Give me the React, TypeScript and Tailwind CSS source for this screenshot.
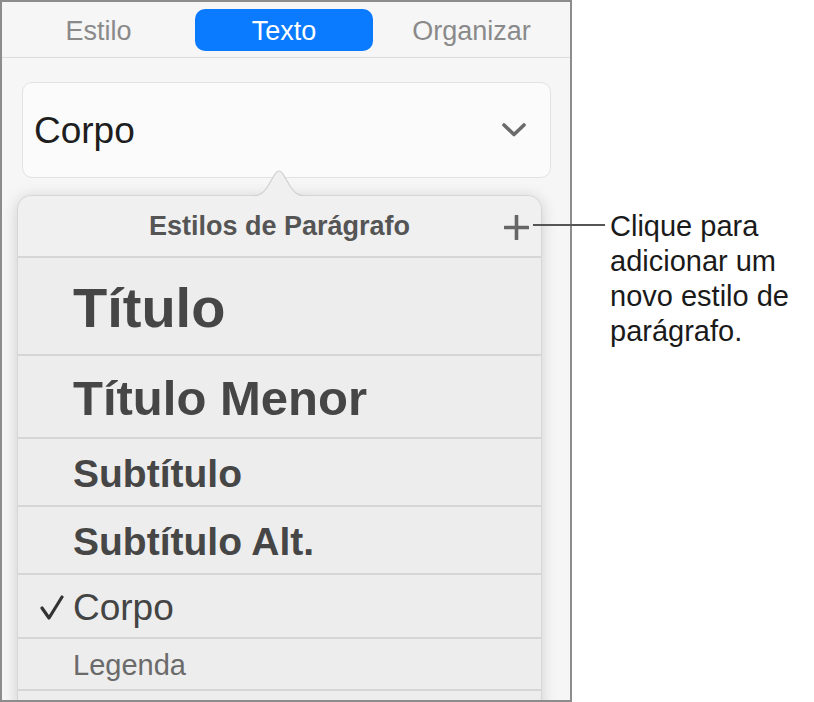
import React from "react";

const rows: { label: string; h: string; cls: string; check?: boolean }[] = [
  { label: "Título", h: "h-[98px]", cls: "text-[56px] font-bold text-[#464646]" },
  { label: "Título Menor", h: "h-[83px]", cls: "text-[49px] font-bold text-[#464646]" },
  { label: "Subtítulo", h: "h-[68px]", cls: "text-[39px] font-bold text-[#464646]" },
  { label: "Subtítulo Alt.", h: "h-[68px]", cls: "text-[39px] font-bold text-[#464646]" },
  { label: "Corpo", h: "h-[64px]", cls: "text-[37px] text-[#444444]", check: true },
  { label: "Legenda", h: "h-[52px]", cls: "text-[29px] text-[#6a6a6a]" },
  { label: "", h: "h-[40px]", cls: "" },
];

export default function App() {
  return (
    <div
      className="relative w-[814px] h-[702px] bg-white overflow-hidden"
      style={{ fontFamily: '"Liberation Sans", Arial, sans-serif' }}
    >
      <div className="w-[572px] h-[702px] border-2 border-[#8c8c8c] bg-[#f6f6f6] overflow-hidden flex flex-col">
        {/* Tabs */}
        <div className="h-[56px] shrink-0 flex items-center border-b-[1.5px] border-[#dcdcdc]">
          <div className="w-[193px] pt-[3px] text-center text-[27px] leading-none text-[#8a8a8a]">Estilo</div>
          <div className="w-[178px] h-[42px] pt-[3px] rounded-[10px] bg-[#0a7aff] flex items-center justify-center text-[27px] leading-none text-white">
            Texto
          </div>
          <div className="flex-1 pt-[3px] text-center text-[27px] leading-none text-[#8a8a8a]">Organizar</div>
        </div>

        {/* Dropdown */}
        <div className="mt-[24px] ml-[20px] w-[529px] h-[96px] shrink-0 rounded-[10px] border border-[#e2e2e2] bg-[#fbfbfb] flex items-center justify-between pl-[11px] pr-[24px]">
          <span className="text-[37px] leading-none text-[#1e1e1e]">Corpo</span>
          <svg width="24" height="14" viewBox="0 0 24 14" fill="none">
            <polyline points="2,2 12,11.5 22,2" stroke="#6b6b6b" strokeWidth="3.6" strokeLinecap="round" strokeLinejoin="round" />
          </svg>
        </div>

        {/* Popover */}
        <div className="relative mt-[17px] ml-[15px] w-[525px] shrink-0 rounded-t-[14px] border border-[#d6d6d6] bg-[#ededed] shadow-[0_2px_16px_rgba(0,0,0,0.16)]">
          <svg
            className="absolute left-[233px] top-[-27px]"
            width="56"
            height="29"
            viewBox="0 0 56 29"
            fill="none"
          >
            <path d="M0 27 C10 27 13 23 17 17 L24 5 Q28 -1 32 5 L39 17 C43 23 46 27 56 27 L56 29 L0 29 Z" fill="#f0f0f0" />
            <path d="M0 27 C10 27 13 23 17 17 L24 5 Q28 -1 32 5 L39 17 C43 23 46 27 56 27" stroke="#cfcfcf" strokeWidth="1.2" fill="none" />
          </svg>

          <div className="relative h-[60px] rounded-t-[14px] bg-[#f0f0f0] flex items-center justify-center">
            <span className="text-[27px] leading-none font-bold text-[#555555]">Estilos de Parágrafo</span>
            <svg className="absolute right-[12px] top-[19px]" width="25" height="25" viewBox="0 0 25 25">
              <line x1="12.5" y1="1" x2="12.5" y2="24" stroke="#666666" strokeWidth="3.6" strokeLinecap="round" />
              <line x1="1" y1="12.5" x2="24" y2="12.5" stroke="#666666" strokeWidth="3.6" strokeLinecap="round" />
            </svg>
          </div>

          {rows.map((r, i) => (
            <div
              key={i}
              className={`${r.h} relative border-t-2 border-[#d6d6d6] flex items-center pl-[55px] pt-[3px]`}
            >
              {r.check && (
                <svg className="absolute left-[22px] top-[20px]" width="24" height="26" viewBox="0 0 24 26" fill="none">
                  <polyline points="2,13 9,23 22,2" stroke="#333333" strokeWidth="3.2" strokeLinecap="round" strokeLinejoin="round" />
                </svg>
              )}
              <span className={`${r.cls} leading-none`}>{r.label}</span>
            </div>
          ))}
        </div>
      </div>

      {/* Callout */}
      <div className="absolute left-[533px] top-[224px] w-[72px] h-[1.5px] bg-[#555555]" />
      <div className="absolute left-[610px] top-[209px] text-[29px] leading-[35px] text-[#1a1a1a]">
        Clique para
        <br />
        adicionar um
        <br />
        novo estilo de
        <br />
        parágrafo.
      </div>
    </div>
  );
}
